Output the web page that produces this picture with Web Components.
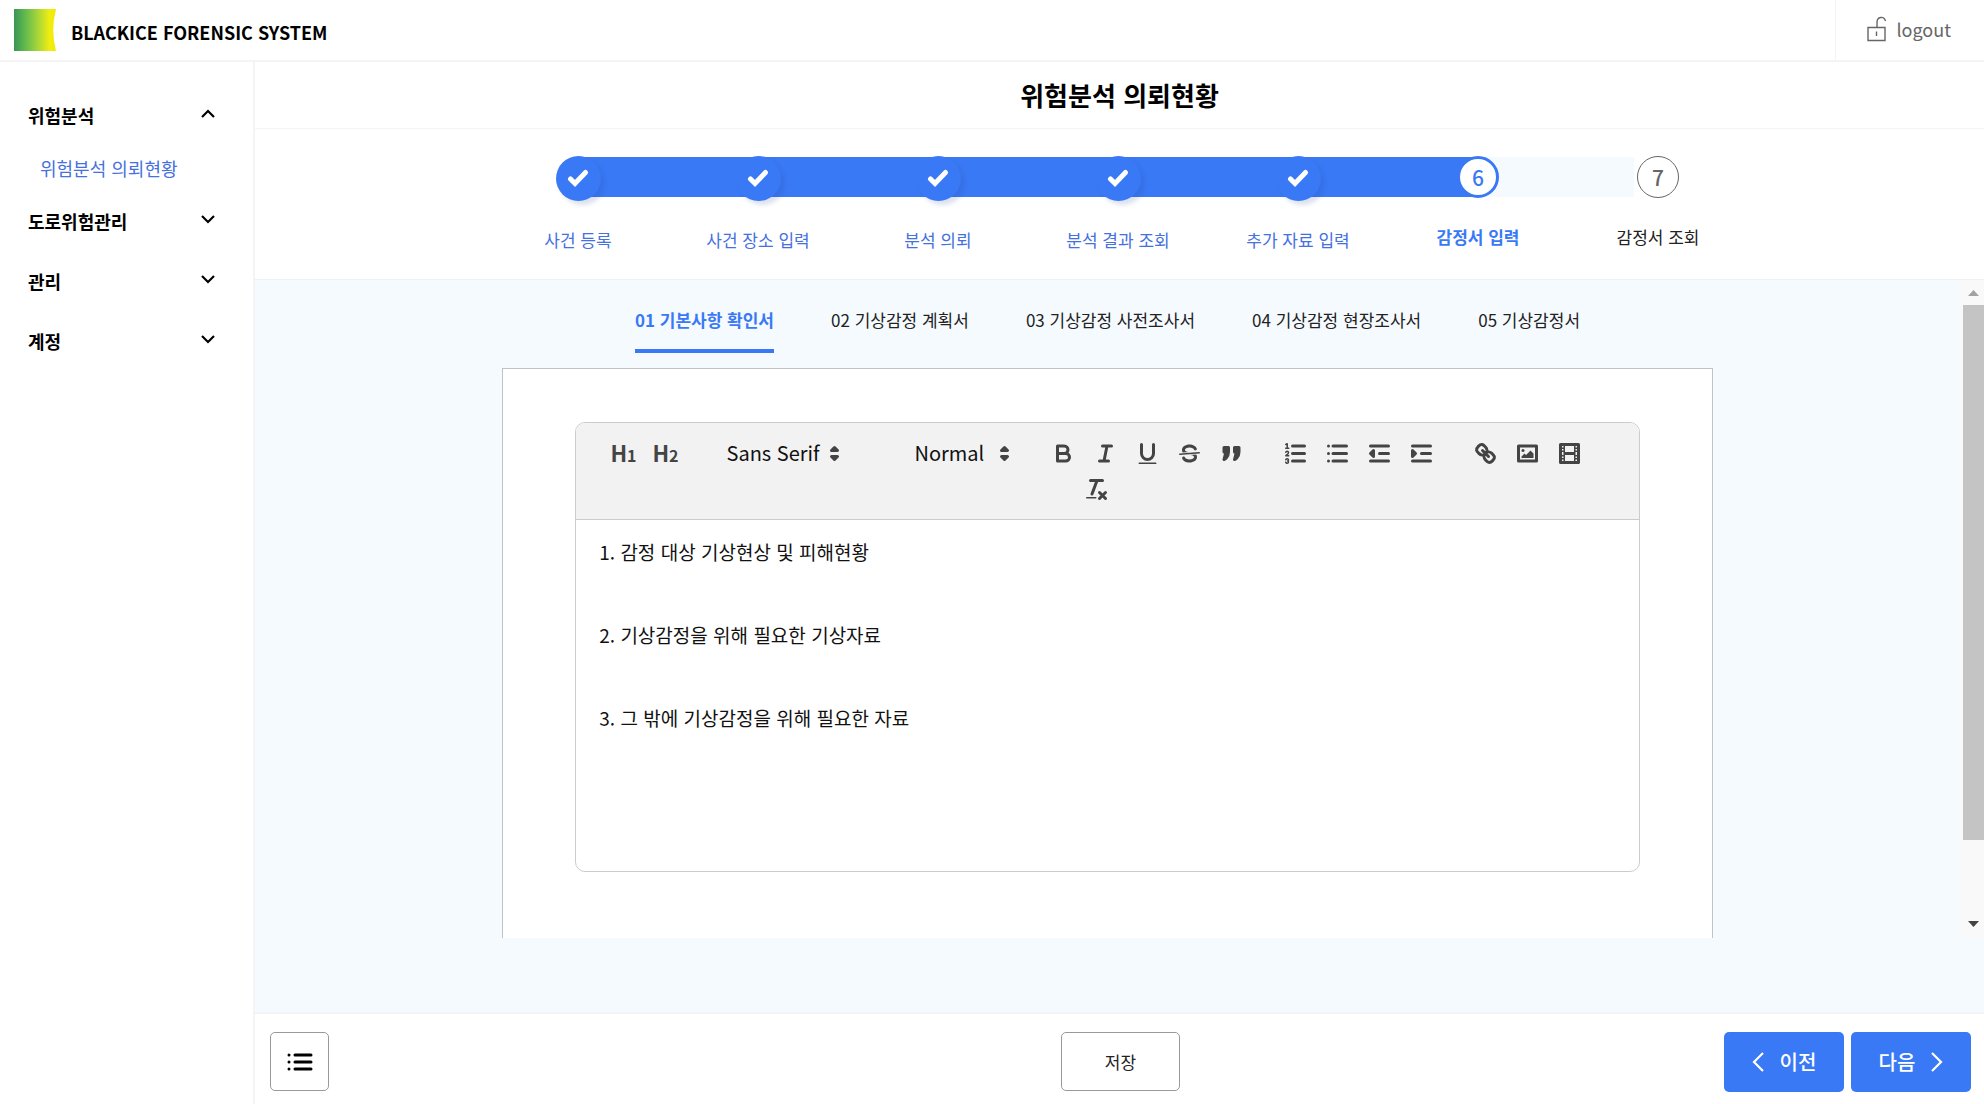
<!DOCTYPE html>
<html lang="ko">
<head>
<meta charset="utf-8">
<title>BLACKICE FORENSIC SYSTEM</title>
<style>
html, body { margin: 0; height: 100%; }
body {
  --blue: #3a79f5; --link: #4570e0; --line: #f4f4f5; --sky: #f5faff;
  font-family: "Noto Sans CJK KR", sans-serif; font-size: 18px; line-height: 26px; color: #111; background: #fff;
}
</style>
</head>
<body>
<app-shell></app-shell>
<script>
const define = (name, html, setup) => {
  const template = document.createElement('template');
  template.innerHTML = html;
  customElements.define(name, class extends HTMLElement {
    connectedCallback() {
      if (this.shadowRoot) return;
      const root = this.attachShadow({ mode: 'open' });
      root.append(template.content.cloneNode(true));
      if (setup) setup(this, root);
    }
  });
};

/* Top bar with the logo and the logout link */
define('app-header', `
<style>
:host { display: flex; justify-content: space-between; height: 60px; border-bottom: 2px solid var(--line); }
.brand { display: flex; align-items: center; gap: 15px; padding-left: 14px; }
h1 { margin: 0; padding-top: 4px; font-size: 18px; font-weight: 700; color: #000; }
a { display: flex; align-items: center; gap: 9px; padding: 0 33px 3px 31px; border-left: 1px solid var(--line); color: #666; font-size: 18px; text-decoration: none; }
svg { display: block; }
</style>
<div class="brand">
  <svg width="42" height="42" viewBox="0 0 42 42" aria-hidden="true">
    <defs><linearGradient id="g"><stop offset="0" stop-color="#3a9455"/><stop offset=".25" stop-color="#5fb84e"/><stop offset=".55" stop-color="#a3d43c"/><stop offset=".85" stop-color="#f0ee10"/><stop offset="1" stop-color="#f2e800"/></linearGradient></defs>
    <path d="M0 0H42Q36.500 21 42 42H0Z" fill="url(#g)"/>
  </svg>
  <h1>BLACKICE FORENSIC SYSTEM</h1>
</div>
<a href="#logout">
  <svg width="20" height="26" viewBox="0 0 20 26" fill="none" stroke="#666" stroke-width="1.400" aria-hidden="true"><path d="M1 11.500H18V24.500H1ZM10 11.500V6.500C10 0 17 0 18.500 5M9.500 15.500V20"/></svg>
  <span>logout</span>
</a>`);

/* One collapsible group of the side menu */
define('nav-group', `
<style>
:host { display: block; }
button { display: flex; justify-content: space-between; align-items: center; width: 100%; height: 60px; padding: 0 38px 0 28px; border: 0; background: none; font: inherit; font-weight: 700; color: #000; }
svg { display: block; margin-bottom: 4px; }
:host([open]) svg { rotate: 180deg; }
::slotted(a) { display: block; padding: 10px 0 10px 40px; color: var(--link); text-decoration: none; }
</style>
<button type="button"><span></span><svg width="14" height="9" viewBox="0 0 14 9" fill="none" stroke="#000" stroke-width="2.200" aria-hidden="true"><path d="M1 1L7 7L13 1"/></svg></button>
<slot></slot>`, (el, root) => {
  root.querySelector('span').textContent = el.getAttribute('label');
  root.querySelector('button').setAttribute('aria-expanded', el.hasAttribute('open'));
});

/* One step of the progress bar: state is done, current or todo */
define('progress-step', `
<style>
:host { display: flex; flex-direction: column; align-items: center; gap: 26px; text-align: center; }
.track { display: grid; grid-template-columns: 1fr 1fr; width: 100%; }
.bar { grid-row: 1; height: 40px; margin-top: 1px; background: var(--blue); }
.left { grid-column: 1; } .right { grid-column: 2; }
.dot { grid-area: 1 / 1 / 2 / 3; justify-self: center; box-sizing: border-box; width: 45px; height: 45px; border-radius: 50%; display: grid; place-items: center; background: var(--blue); box-shadow: 4px 4px 4px rgba(40,70,150,.16); font-size: 21px; font-weight: 500; }
.label { color: var(--link); font-size: 17px; }
:host([state=current]) .dot { width: 42px; height: 42px; background: #fff; border: 3px solid var(--blue); box-shadow: none; color: var(--blue); }
:host([state=current]) .label { color: var(--blue); font-weight: 700; }
:host([state=current]) .right, :host([state=todo]) .left { background: var(--sky); }
:host([state=todo]) .left { margin-right: 24px; }
:host([state=todo]) .dot { width: 42px; height: 42px; background: #fff; border: 1px solid #666; box-shadow: none; color: #666; }
:host([state=todo]) .label { color: #222; }
:host(:first-child) .left, :host(:last-child) .right { background: none; }
</style>
<div class="track"><div class="bar left"></div><div class="bar right"></div><div class="dot"></div></div>
<div class="label"><slot></slot></div>`, (el, root) => {
  const dot = root.querySelector('.dot');
  if (el.getAttribute('state') === 'done') {
    dot.innerHTML = '<svg width="24" height="20" viewBox="0 0 24 20" fill="none" stroke="#fff" stroke-width="5" stroke-linecap="round" aria-hidden="true"><path d="M4.500 10L9 14.500L19.500 3.500"/></svg>';
  } else dot.textContent = el.getAttribute('number');
});

/* Icons of the text editor, on an 18 unit grid */
const ICONS = {
  '굵게': '<path d="M5 4H9.500A2.500 2.500 0 0 1 9.500 9H5ZM5 9H10.500A2.500 2.500 0 0 1 10.500 14H5Z"/>',
  '기울임': '<path d="M7 4H13M5 14H11M8 14L10 4"/>',
  '밑줄': '<path d="M5 3V9A4 4 0 0 0 13 9V3"/><rect class="f" x="3" y="15" width="12" height="1" rx=".5"/>',
  '취소선': '<path class="t" d="M15.500 8.500L2.500 9.500"/><path class="f" d="M9.007 8C6.542 7.791 6 7.519 6 6.500 6 5.792 7.283 5 9 5c1.571 0 2.765.679 2.969 1.309a1 1 0 0 0 1.900-.617C13.356 4.106 11.354 3 9 3 6.200 3 4 4.538 4 6.500a3.200 3.200 0 0 0 .5 1.843Z"/><path class="f" d="M8.984 10C11.457 10.208 12 10.479 12 11.500c0 .708-1.283 1.500-3 1.500-1.571 0-2.765-.679-2.969-1.309a1 1 0 1 0-1.900.617C4.644 13.894 6.646 15 9 15c2.800 0 5-1.538 5-3.500a3.200 3.200 0 0 0-.5-1.843Z"/>',
  '인용': '<path class="b" d="M4 5H7V8H4ZM11 5H14V8H11ZM7 8C7 12.031 4 13 4 13L5 9ZM14 8C14 12.031 11 13 11 13L12 9Z"/>',
  '번호 목록': '<path d="M7 4H15M7 9H15M7 14H15"/><path class="t" d="M2.500 5.500H4.500M2.500 3L3.500 2.500V5.500M4.500 10.500H2.500C2.500 10.266 4.350 9.424 4.350 8.266A.959.959 0 0 0 2.500 8.156M2.500 14.846A.959.959 0 0 0 4.350 14.737 .7.7 0 0 0 3.750 14 .688.688 0 0 0 4.350 13.264 .959.959 0 0 0 2.500 13.155"/>',
  '글머리 목록': '<path d="M6 4H15M6 9H15M6 14H15M3 4V4M3 9V9M3 14V14"/>',
  '내어쓰기': '<path d="M3 14H15M3 4H15M9 9H15"/><path class="b" d="M5 7V11L3 9Z"/>',
  '들여쓰기': '<path d="M3 14H15M3 4H15M9 9H15"/><path class="b" d="M3 7V11L5 9Z"/>',
  '링크': '<path d="M7 7L11 11M8.900 4.577a3.476 3.476 0 0 1 .36 4.679A3.476 3.476 0 0 1 4.577 8.900C3.185 7.500 2.035 6.400 4.217 4.217S7.500 3.185 8.900 4.577ZM13.423 9.100a3.476 3.476 0 0 0-4.679-.36 3.476 3.476 0 0 0 .36 4.679c1.392 1.392 2.500 2.542 4.679.36S14.815 10.500 13.423 9.100Z"/>',
  '이미지': '<rect x="3" y="4" width="12" height="10"/><circle class="f" cx="6" cy="7" r="1"/><path class="f" d="M5 12V11L7 9L8 10L11 7L13 9V12Z"/>',
  '동영상': '<rect x="3" y="3" width="12" height="12"/><path class="f" d="M5 3H6V15H5ZM12 3H13V15H12ZM5 8H13V10H5ZM3 5H6V6H3ZM3 7H6V8H3ZM3 10H6V11H3ZM3 12H6V13H3ZM12 5H15V6H12ZM12 7H15V8H12ZM12 10H15V11H12ZM12 12H15V13H12Z"/>',
  '서식 지우기': '<path d="M5 3H13M6 12L9.350 3M11 11L15 15M15 11L11 15"/><rect class="f" x="2" y="14" width="7" height="1" rx=".5"/>',
  'arrows': '<path class="b" d="M7 11L9 13L11 11ZM7 7L9 5L11 7Z"/>'
};
const icon = name => `<svg width="27" height="27" viewBox="0 0 18 18" aria-hidden="true">${ICONS[name]}</svg>`;
const group = names => `<div class="group">${names.map(n => `<button type="button" aria-label="${n}">${icon(n)}</button>`).join('')}</div>`;

define('text-editor', `
<style>
:host { display: block; border: 1px solid #ccc; border-radius: 10px; overflow: hidden; background: #fff; }
.toolbar { display: flex; flex-wrap: wrap; justify-content: center; padding: 12px; background: #f2f2f2; border-bottom: 1px solid #ccc; }
.group { display: flex; margin-right: 22px; }
button { display: flex; align-items: center; justify-content: center; width: 42px; height: 36px; padding: 0; border: 0; background: none; color: #444; }
.head { align-items: baseline; font: 700 22px/34px "Noto Sans CJK KR", sans-serif; }
.head small { font-size: 16px; }
svg { display: block; fill: none; stroke: #444; stroke-width: 2; stroke-linecap: round; stroke-linejoin: round; }
.f { fill: #444; stroke: none; } .b { fill: #444; } .t { stroke-width: 1; }
.pick { display: grid; align-items: center; height: 36px; }
.pick > * { grid-area: 1 / 1; }
.pick svg { justify-self: end; pointer-events: none; }
.font { width: 140px; margin-right: 48px; } .size { width: 122px; margin-right: 24px; }
select { appearance: none; width: 100%; height: 36px; padding: 0 0 0 18px; border: 0; background: none; font: inherit; font-size: 20px; color: #111; }
.text { min-height: 315px; padding: 18px 23px; font-size: 19px; line-height: 27px; outline: 0; }
p { margin: 0 0 56px; } p:last-child { margin: 0; }
</style>
<div class="toolbar" role="toolbar">
  <div class="group"><button type="button" class="head">H<small>1</small></button><button type="button" class="head">H<small>2</small></button></div>
  <div class="group pick font"><select aria-label="글꼴"><option>Sans Serif</option><option>Serif</option><option>Monospace</option></select>${icon('arrows')}</div>
  <div class="group pick size"><select aria-label="글자 크기"><option>Normal</option><option>Small</option><option>Large</option></select>${icon('arrows')}</div>
  ${group(['굵게', '기울임', '밑줄', '취소선', '인용'])}
  ${group(['번호 목록', '글머리 목록', '내어쓰기', '들여쓰기'])}
  ${group(['링크', '이미지', '동영상'])}
  ${group(['서식 지우기'])}
</div>
<div class="text" contenteditable="true" role="textbox" aria-multiline="true" aria-label="본문" spellcheck="false"><p>1. 감정 대상 기상현상 및 피해현황</p><p>2. 기상감정을 위해 필요한 기상자료</p><p>3. 그 밖에 기상감정을 위해 필요한 자료</p></div>`);

/* Vertical scroll bar beside the document pane */
define('scroll-rail', `
<style>
:host { display: flex; flex-direction: column; align-items: flex-end; box-sizing: border-box; width: 24px; background: #f9f9fa; }
svg { display: block; width: 21px; height: 25px; flex: none; }
.rail { flex: 1; width: 21px; }
.thumb { height: 88%; background: #c4c4c4; }
</style>
<svg viewBox="0 0 21 25" aria-hidden="true"><path d="M5 16L10.500 10L16 16Z" fill="#a3a3a3"/></svg>
<div class="rail"><div class="thumb"></div></div>
<svg viewBox="0 0 21 25" aria-hidden="true"><path d="M5 8L10.500 14L16 8Z" fill="#444"/></svg>`);

define('doc-pane', `
<style>
:host { display: flex; flex: 1; min-height: 0; }
.content { flex: 1; display: flex; flex-direction: column; min-width: 0; overflow: hidden; }
nav { display: flex; justify-content: center; gap: 57px; padding-top: 27px; margin-bottom: 15px; font-size: 17px; }
nav a { padding-bottom: 16px; border-bottom: 4px solid transparent; color: #222; text-decoration: none; white-space: nowrap; }
nav a[aria-current] { color: var(--blue); border-color: var(--blue); font-weight: 700; }
.sheet { flex: 1 0 auto; width: 71%; box-sizing: border-box; margin: 0 auto; padding: 53px 72px; border: 1px solid #bfc3c8; border-bottom: 0; background: #fff; }
</style>
<div class="content">
  <nav>
    <a href="#1" aria-current="page">01 기본사항 확인서</a>
    <a href="#2">02 기상감정 계획서</a>
    <a href="#3">03 기상감정 사전조사서</a>
    <a href="#4">04 기상감정 현장조사서</a>
    <a href="#5">05 기상감정서</a>
  </nav>
  <div class="sheet"><text-editor></text-editor></div>
</div>
<scroll-rail></scroll-rail>`);

define('action-bar', `
<style>
:host { display: grid; grid-template-columns: 1fr auto 1fr; padding: 18px 13px 12px 15px; border-top: 2px solid var(--line); background: #fff; }
button { display: flex; align-items: center; justify-content: center; box-sizing: border-box; width: 119px; height: 59px; padding: 0; border: 1px solid #999; border-radius: 5px; background: #fff; font: inherit; font-size: 17px; color: #222; }
.list { width: 59px; }
.end { display: flex; justify-content: flex-end; gap: 7px; }
.end button { gap: 16px; width: 120px; height: 60px; border: 0; background: var(--blue); color: #fff; font-size: 20px; font-weight: 500; }
svg { display: block; }
</style>
<div><button type="button" class="list" aria-label="목록"><svg width="28" height="20" viewBox="0 0 28 20" fill="none" stroke="#000" stroke-width="3" stroke-linecap="round" aria-hidden="true"><path d="M9 3H25M9 10H25M9 17H25M3 3V3M3 10V10M3 17V17"/></svg></button></div>
<button type="button">저장</button>
<div class="end">
  <button type="button"><svg width="12" height="20" viewBox="0 0 12 20" fill="none" stroke="#fff" stroke-width="2.200" aria-hidden="true"><path d="M11 1L2 10L11 19"/></svg>이전</button>
  <button type="button">다음<svg width="12" height="20" viewBox="0 0 12 20" fill="none" stroke="#fff" stroke-width="2.200" aria-hidden="true"><path d="M1 1L10 10L1 19"/></svg></button>
</div>`);

define('app-shell', `
<style>
:host { display: flex; flex-direction: column; height: 100vh; }
.body { display: flex; flex: 1; min-height: 0; }
aside { flex: none; padding-top: 23px; box-sizing: border-box; border-right: 2px solid var(--line); width: 255px; }
main { flex: 1; min-width: 0; display: flex; flex-direction: column; }
h2 { margin: 0; padding: 14px 0; font-size: 26px; line-height: 38px; font-weight: 700; text-align: center; color: #000; border-bottom: 1px solid var(--line); }
.steps { display: grid; grid-template-columns: repeat(7, 180px); justify-content: center; padding: 27px 3px 26px 0; border-bottom: 1px solid #eef0f4; }
.work { flex: 1; min-height: 0; display: flex; flex-direction: column; padding-bottom: 74px; background: var(--sky); }
</style>
<app-header></app-header>
<div class="body">
  <aside>
    <nav-group label="위험분석" open><a href="#requests">위험분석 의뢰현황</a></nav-group>
    <nav-group label="도로위험관리"></nav-group>
    <nav-group label="관리"></nav-group>
    <nav-group label="계정"></nav-group>
  </aside>
  <main>
    <h2>위험분석 의뢰현황</h2>
    <div class="steps">
      <progress-step state="done">사건 등록</progress-step>
      <progress-step state="done">사건 장소 입력</progress-step>
      <progress-step state="done">분석 의뢰</progress-step>
      <progress-step state="done">분석 결과 조회</progress-step>
      <progress-step state="done">추가 자료 입력</progress-step>
      <progress-step state="current" number="6">감정서 입력</progress-step>
      <progress-step state="todo" number="7">감정서 조회</progress-step>
    </div>
    <div class="work"><doc-pane></doc-pane></div>
    <action-bar></action-bar>
  </main>
</div>`);
</script>
</body>
</html>
